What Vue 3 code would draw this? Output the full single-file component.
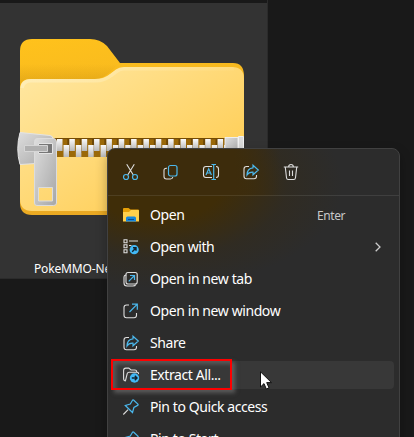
<script setup>
const actions = ['cut', 'copy', 'rename', 'share', 'trash']
const items = [
  { icon: 'open', label: 'Open', hint: 'Enter' },
  { icon: 'with', label: 'Open with', arrow: true },
  { icon: 'tab', label: 'Open in new tab' },
  { icon: 'window', label: 'Open in new window' },
  { icon: 'share', label: 'Share' },
  { icon: 'extract', label: 'Extract All...', active: true },
  { icon: 'pin', label: 'Pin to Quick access' },
  { icon: 'pin', label: 'Pin to Start' },
]
const glyphs = {
  cut: '<path class="w" d="M3.7.3 10.300 11M11.300.3 4.700 11"/><circle class="b" cx="3" cy="13" r="2.500"/><circle class="b" cx="12" cy="13" r="2.500"/>',
  copy: '<path class="w" d="M4 4.200H3.300Q1 4.200 1 6.500v6Q1 15 3.400 15h4Q9.500 15 9.800 13"/><rect class="b" x="5.500" y="1.500" width="8.500" height="10.500" rx="2"/>',
  rename: '<path class="w" d="M9 2.500H3Q.5 2.500 .5 5v6Q.5 13.500 3 13.500h6M13 2.500Q15.500 2.500 15.500 5v6Q15.500 13.500 13 13.500"/><path class="b" d="M3 11 5.700 4.700 8.400 11M4 9h3.500M8.500 .5h4.500M8.500 15.500h4.500M10.700 .5v15"/>',
  share: '<path class="w" d="M6 2.500H3.500Q1 2.500 1 5v7.200Q1 14.700 3.500 14.700h7.500Q13.500 14.700 13.500 12.200V11"/><path class="b" d="M10 1.200 15.300 6 10 10.800V8.200C7 8 5.200 9 4 11 4 7.500 5.700 4.200 10 3.800Z"/>',
  trash: '<path class="w" d="M.8 3h14.400M5.700 2.800C5.700-.2 10.300-.2 10.300 2.800M2.300 3.200 3.500 13.700Q3.700 15.500 5.300 15.500h5.400q1.600 0 1.800-1.800L13.700 3.200M6.500 6.500v5.500M9.500 6.500v5.500"/>',
  open: '<path fill="#e6a008" d="M0 2Q0 1 1 1h4.500L7.500 2.500H15q1 0 1 1v4H0Z"/><path fill="#ffd04c" d="M0 5h6L8 3h7q1 0 1 1v10.500H0Z"/><path fill="#1686dc" d="M3 14.500v-3.500Q3 9.500 4.500 9.500h7Q13 9.500 13 11v3.500Z"/><path stroke="#074f91" d="M5 12.500h6"/>',
  with: '<path class="w" d="M1 .8h3v3H1ZM1 5.800h3v3H1ZM1 10.800h3v3H1ZM6 2h9M6 6.500h2.500"/><circle cx="11.200" cy="10.700" r="4.600" fill="#42b8f5"/><path stroke="#10222d" stroke-width="1.400" fill="none" d="M9.200 12.700 12.900 9M10 8.800h3v3"/>',
  tab: '<path class="w" d="M3.200 4Q1 4 1 6.500V12q0 3 3 3h6q2.200 0 2.700-1.500"/><rect class="w" x="3" y="1.500" width="11.200" height="11.500" rx="2"/><path class="b" d="M5.700 10.300 11.500 4.500M7 4.500h4.500V9"/>',
  window: '<path class="w" d="M6 2H3.500Q1 2 1 4.500v7.700Q1 14.700 3.500 14.700h7.500Q13.500 14.700 13.500 12.200V10"/><path class="b" d="M6.500 9 14.300 1.200M9 1.200h5.300v5.500"/>',
  extract: '<path class="w" d="M2.800 14Q.6 14 .6 11.500V3.500Q.6 1.100 2.800 1.100h3L8 3h3.800Q13.800 3 13.800 5M2.500 13.500 4.200 6.700Q4.600 5.200 6 5.200h7.800q2 0 1.700 2"/><circle cx="11.500" cy="11" r="4.700" fill="#42b8f5"/><path stroke="#10222d" stroke-width="1.400" fill="none" d="M8.800 11h5M11.800 8.800 14 11l-2.200 2.200"/>',
  pin: '<path class="w" d="M.3 15.500 5.100 10.700"/><path class="b" d="M9.500 1.300Q10 .5 10.800 1.200L14.900 5.100Q15.600 5.900 14.600 6.400L10.900 8.500 9.500 13.500 2.300 6.500 7.300 5.100Z"/>',
}
const topTeeth = Array.from({ length: 14 }, (_, i) => 57 + i * 12.35)
const bottomTeeth = Array.from({ length: 14 }, (_, i) => 63.5 + i * 12.35)
</script>

<template>
  <main class="desktop">
    <section class="tile">
      <svg class="folder" width="268" height="212" viewBox="0 3 268 212">
        <defs>
          <linearGradient id="back" x1="0" y1="0" x2=".25" y2="1">
            <stop offset="0" stop-color="#ffc21c" /><stop offset="1" stop-color="#eaa923" />
          </linearGradient>
          <linearGradient id="front" x1="0" y1="0" x2="1" y2="1">
            <stop offset="0" stop-color="#ffe8a4" /><stop offset="1" stop-color="#ffc844" />
          </linearGradient>
          <linearGradient id="tooth" x1="0" y1="0" x2="0" y2="1">
            <stop offset="0" stop-color="#fafafa" /><stop offset="1" stop-color="#b9b9b9" />
          </linearGradient>
          <linearGradient id="metal" x1="0" y1="0" x2="1" y2="1">
            <stop offset="0" stop-color="#dedede" /><stop offset="1" stop-color="#a6a6a6" />
          </linearGradient>
          <linearGradient id="shade" x1="0" y1="0" x2="0" y2="1">
            <stop offset="0" stop-color="#b07808" stop-opacity="0" /><stop offset="1" stop-color="#b07808" stop-opacity=".35" />
          </linearGradient>
          <linearGradient id="rim" x1="0" y1="0" x2="1" y2="0">
            <stop offset="0" stop-color="#fff1c4" stop-opacity=".6" /><stop offset="1" stop-color="#fff1c4" stop-opacity=".1" />
          </linearGradient>
        </defs>
        <path fill="url(#back)" d="M20 51Q20 39 32 39H90Q100 39 107 46L120 63H233Q244 63 244 76V203Q244 215 232 215H32Q20 215 20 203Z" />
        <path fill="url(#shade)" d="M20 64H118Q105 79 96 79H30Q20 79 20 88Z" />
        <path fill="url(#front)" d="M20 90Q20 79 31 79H95Q104 79 110 74L116 69.500Q119 67 124 67H232Q244 67 244 79V199Q244 211 232 211H32Q20 211 20 199Z" />
        <path fill="none" stroke="url(#rim)" stroke-width="3.500" d="M22 88Q23 80.800 31 80.800H95Q105 80.800 111 75.500L117 71Q120 68.800 124 68.800H234" />
        <path fill="#9b6909" d="M54 138H226V157H54Z" />
        <path fill="#744b05" d="M54 138H226V139.200H54Z" />
        <g v-for="x in topTeeth" :key="'t' + x">
          <rect :x="x - 2" y="139" width="2" height="14" fill="#6d4706" />
          <rect :x="x" y="139" width="5.500" height="12" fill="url(#tooth)" />
        </g>
        <rect v-for="x in bottomTeeth" :key="'b' + x" :x="x" y="145" width="5.500" height="12" fill="url(#tooth)" />
        <path fill="url(#metal)" stroke="#eee" d="M225 137.500h13v20h-13Z" />
        <path fill="#dadada" stroke="#f1f1f1" d="M238.500 136.500h5v22h-5Z" />
        <path fill="url(#metal)" stroke="#e4e4e4" d="M20 132.500 50 135.500Q53 136 53 139V158L36 163.500 20 164.500Q15.500 149 20 132.500Z" />
        <path fill="url(#metal)" fill-rule="evenodd" stroke="#dcdcdc" d="M37 138.500H53.500Q56.500 138.500 56.500 142V203Q56.500 205.500 53.500 205.500H37Q34.500 205.500 34.500 203V142Q34.500 138.500 37 138.500ZM38.500 187.500V201H52.500V187.500Z" />
        <path fill="#777" stroke="#e4e4e4" d="M38.500 143.500h14v10h-14Z" />
        <path fill="#b0b0b0" stroke="#d6d6d6" d="M24.500 145.500h23v6h-23Z" />
      </svg>
      <span class="filename">PokeMMO-New</span>
    </section>

    <nav class="menu">
      <div class="actions">
        <svg v-for="a in actions" :key="a" class="icon" viewBox="0 0 16 16" v-html="glyphs[a]" />
      </div>
      <ul class="list">
        <li v-for="item in items" :key="item.label" class="row" :class="{ active: item.active }">
          <svg class="icon" viewBox="0 0 16 16" v-html="glyphs[item.icon]" />
          <span class="label">{{ item.label }}</span>
          <span v-if="item.hint" class="hint">{{ item.hint }}</span>
          <svg v-if="item.arrow" class="arrow" viewBox="0 0 6 10"><path d="M.7.700 5 5 .7 9.300" /></svg>
        </li>
      </ul>
    </nav>
    <div class="marker"></div>
    <svg class="cursor" viewBox="0 0 12 19">
      <path d="M.5.800V16L4 12.600 6.300 18 9 16.800 6.700 11.600H11.500Z" />
    </svg>
  </main>
</template>

<style>
body { margin: 0; background: #191919; }
</style>

<style scoped>
.desktop {
  position: relative;
  width: 414px;
  height: 437px;
  overflow: hidden;
  background: #191919;
  font-family: "Noto Sans", "Open Sans", sans-serif;
}
.tile {
  box-sizing: border-box;
  width: 268px;
  height: 279px;
  padding-top: 3px;
  background: linear-gradient(#191919 3px, #333 3px);
  box-shadow: inset -1px -1px #2b2b2b;
}
.folder { display: block; }
.filename {
  display: block;
  margin: 45px 0 0 34px;
  font-size: 12px;
  line-height: 17px;
  letter-spacing: -0.15px;
  color: #fff;
}
.menu {
  position: absolute;
  left: 107px;
  top: 148px;
  box-sizing: border-box;
  width: 293px;
  height: 310px;
  border: 1px solid #414141;
  border-radius: 8px;
  background:
    linear-gradient(90deg, #3d2c0c 0, #3d2c0c 125px, rgba(61, 44, 12, 0) 172px) 0 0 / 100% 47px no-repeat,
    radial-gradient(ellipse 185px 105px at 50px 35px, #3f2d08 35%, rgba(52, 43, 25, .5) 70%, rgba(44, 44, 44, 0) 100%),
    #2c2c2c;
  box-shadow: 0 5px 12px rgba(0, 0, 0, .3);
}
.actions {
  display: flex;
  gap: 24px;
  box-sizing: border-box;
  height: 47px;
  padding: 15px 15px 0;
  border-bottom: 1px solid rgba(255, 255, 255, .09);
}
.icon {
  flex: none;
  width: 16px;
  height: 16px;
  overflow: visible;
}
.icon :deep(.w) { fill: none; stroke: #dedede; stroke-width: 1.1; }
.icon :deep(.b) { fill: none; stroke: #4bb8ed; stroke-width: 1.2; }
.list { margin: 0; padding: 3px 5px 0; list-style: none; }
.row {
  display: flex;
  align-items: center;
  box-sizing: border-box;
  height: 28px;
  margin: 2px 0 4px;
  padding: 0 17px 0 10px;
  border-radius: 4px;
}
.row.active { background: #383838; }
.label {
  flex: 1;
  margin-left: 11px;
  font-size: 14px;
  line-height: 20px;
  letter-spacing: -0.41px;
  white-space: nowrap;
  color: #fff;
}
.hint { margin-right: 32px; font-size: 12px; letter-spacing: -0.45px; color: #c8c8c8; }
.arrow { width: 6px; height: 10px; margin-right: -4px; }
.arrow path { fill: none; stroke: #ccc; stroke-width: 1.300; }
.marker {
  position: absolute;
  left: 111px;
  top: 359px;
  box-sizing: border-box;
  width: 121px;
  height: 31px;
  border: 2px solid #f00;
  box-shadow: 3px 3px 4px rgba(115, 115, 115, .65), inset 3px 3px 4px rgba(115, 115, 115, .6);
}
.cursor { position: absolute; left: 260px; top: 371px; width: 12px; height: 19px; }
.cursor path { fill: #fff; stroke: #111; stroke-width: 1; }
</style>
